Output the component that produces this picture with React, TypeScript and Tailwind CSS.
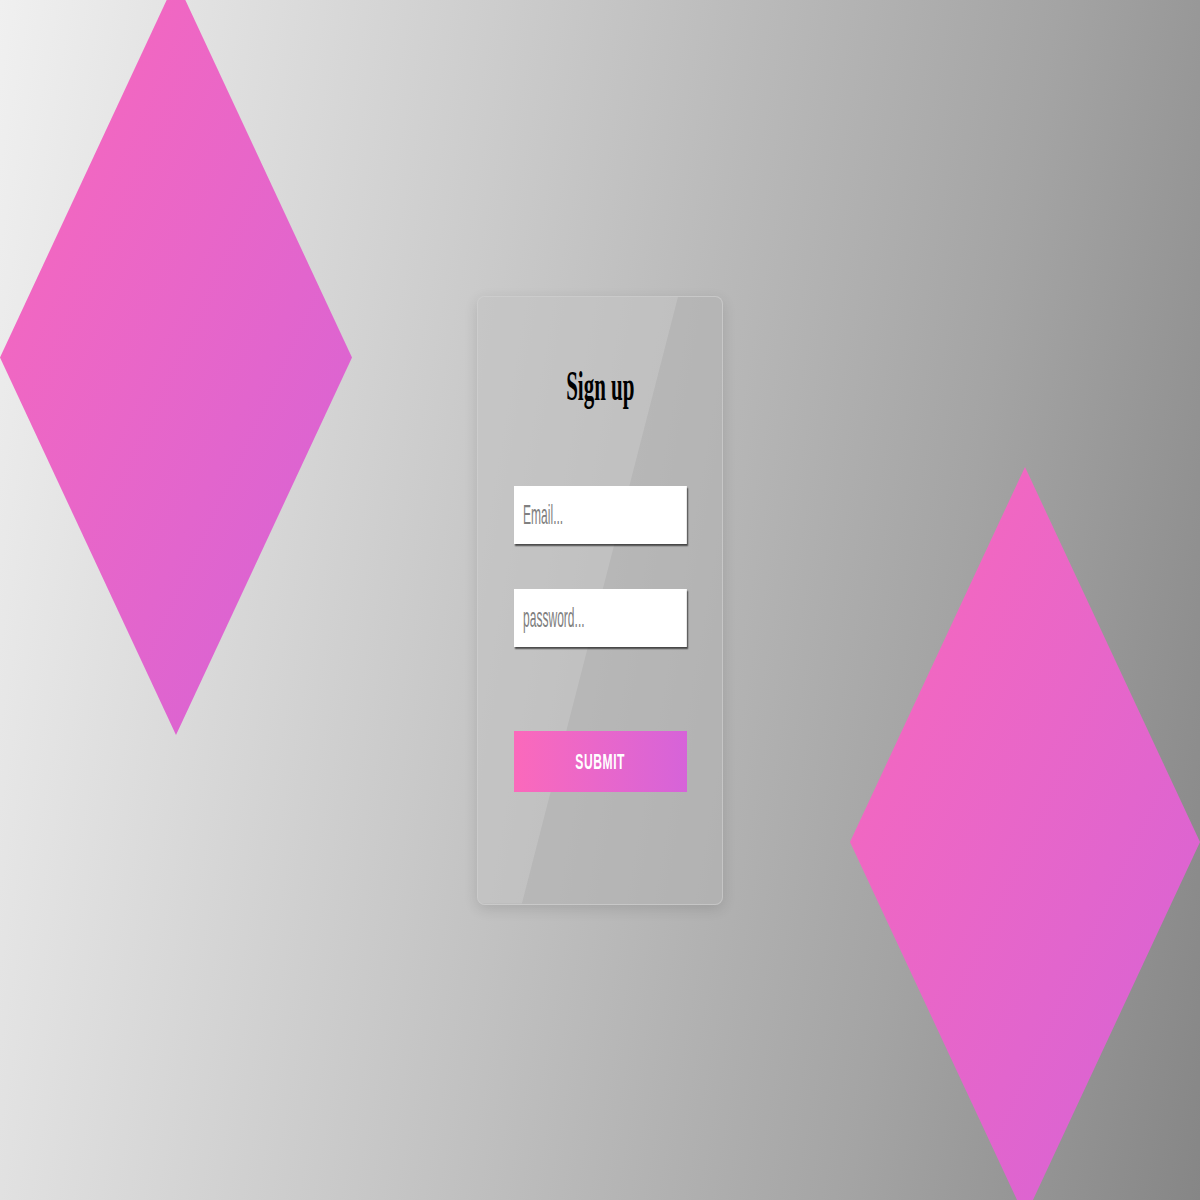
import React from 'react';

export default function App() {
  return (
    <div className="relative w-[1200px] h-[1200px] overflow-hidden flex items-center justify-center antialiased bg-[linear-gradient(100deg,#f0f0f0_0%,#c8c8c8_40%,#a4a4a4_75%,#868686_100%)]">
      {/* diamonds */}
      <div className="absolute left-0 top-[-20px] w-[352px] h-[755px] [clip-path:polygon(50%_0,100%_50%,50%_100%,0_50%)] bg-gradient-to-br from-[#fa68bb] to-[#d462d7]" />
      <div className="absolute left-[850px] top-[467px] w-[350px] h-[750px] [clip-path:polygon(50%_0,100%_50%,50%_100%,0_50%)] bg-gradient-to-br from-[#fa68bb] to-[#d462d7]" />

      {/* card */}
      <div className="relative w-[246px] h-[609px] rounded-lg overflow-hidden border border-white/25 bg-[#b2b2b2]/60 shadow-[0_4px_14px_rgba(0,0,0,0.12)]">
        <div className="absolute inset-0 bg-white/15 [clip-path:polygon(0_0,82%_0,18%_100%,0_100%)]" />
        <div className="relative flex flex-col items-center pt-[68px]">
          <h1 className="h-[44px] flex items-center text-[42px] font-bold text-black [font-family:'Liberation_Serif',serif]">
            <span className="inline-block scale-x-[0.5]">Sign up</span>
          </h1>
          <div className="w-[173px] mt-[77px] flex flex-col">
            <input
              placeholder="Email..."
              className="w-[402px] h-[58px] origin-left scale-x-[0.43] bg-white pl-[21px] text-[28px] placeholder:text-[#808080] outline-none shadow-[2px_2px_2px_rgba(0,0,0,0.6)] [font-family:'Liberation_Sans',sans-serif]"
            />
            <input
              placeholder="password..."
              className="w-[402px] h-[58px] mt-[45px] origin-left scale-x-[0.43] bg-white pl-[21px] text-[28px] placeholder:text-[#808080] outline-none shadow-[2px_2px_2px_rgba(0,0,0,0.6)] [font-family:'Liberation_Sans',sans-serif]"
            />
            <button className="mt-[84px] h-[61px] w-full flex items-center justify-center bg-gradient-to-r from-[#fb69bb] to-[#d663d9] text-white text-[22px] font-bold [font-family:'Liberation_Sans',sans-serif]">
              <span className="inline-block scale-x-[0.55] tracking-[1px]">SUBMIT</span>
            </button>
          </div>
        </div>
      </div>
    </div>
  );
}
